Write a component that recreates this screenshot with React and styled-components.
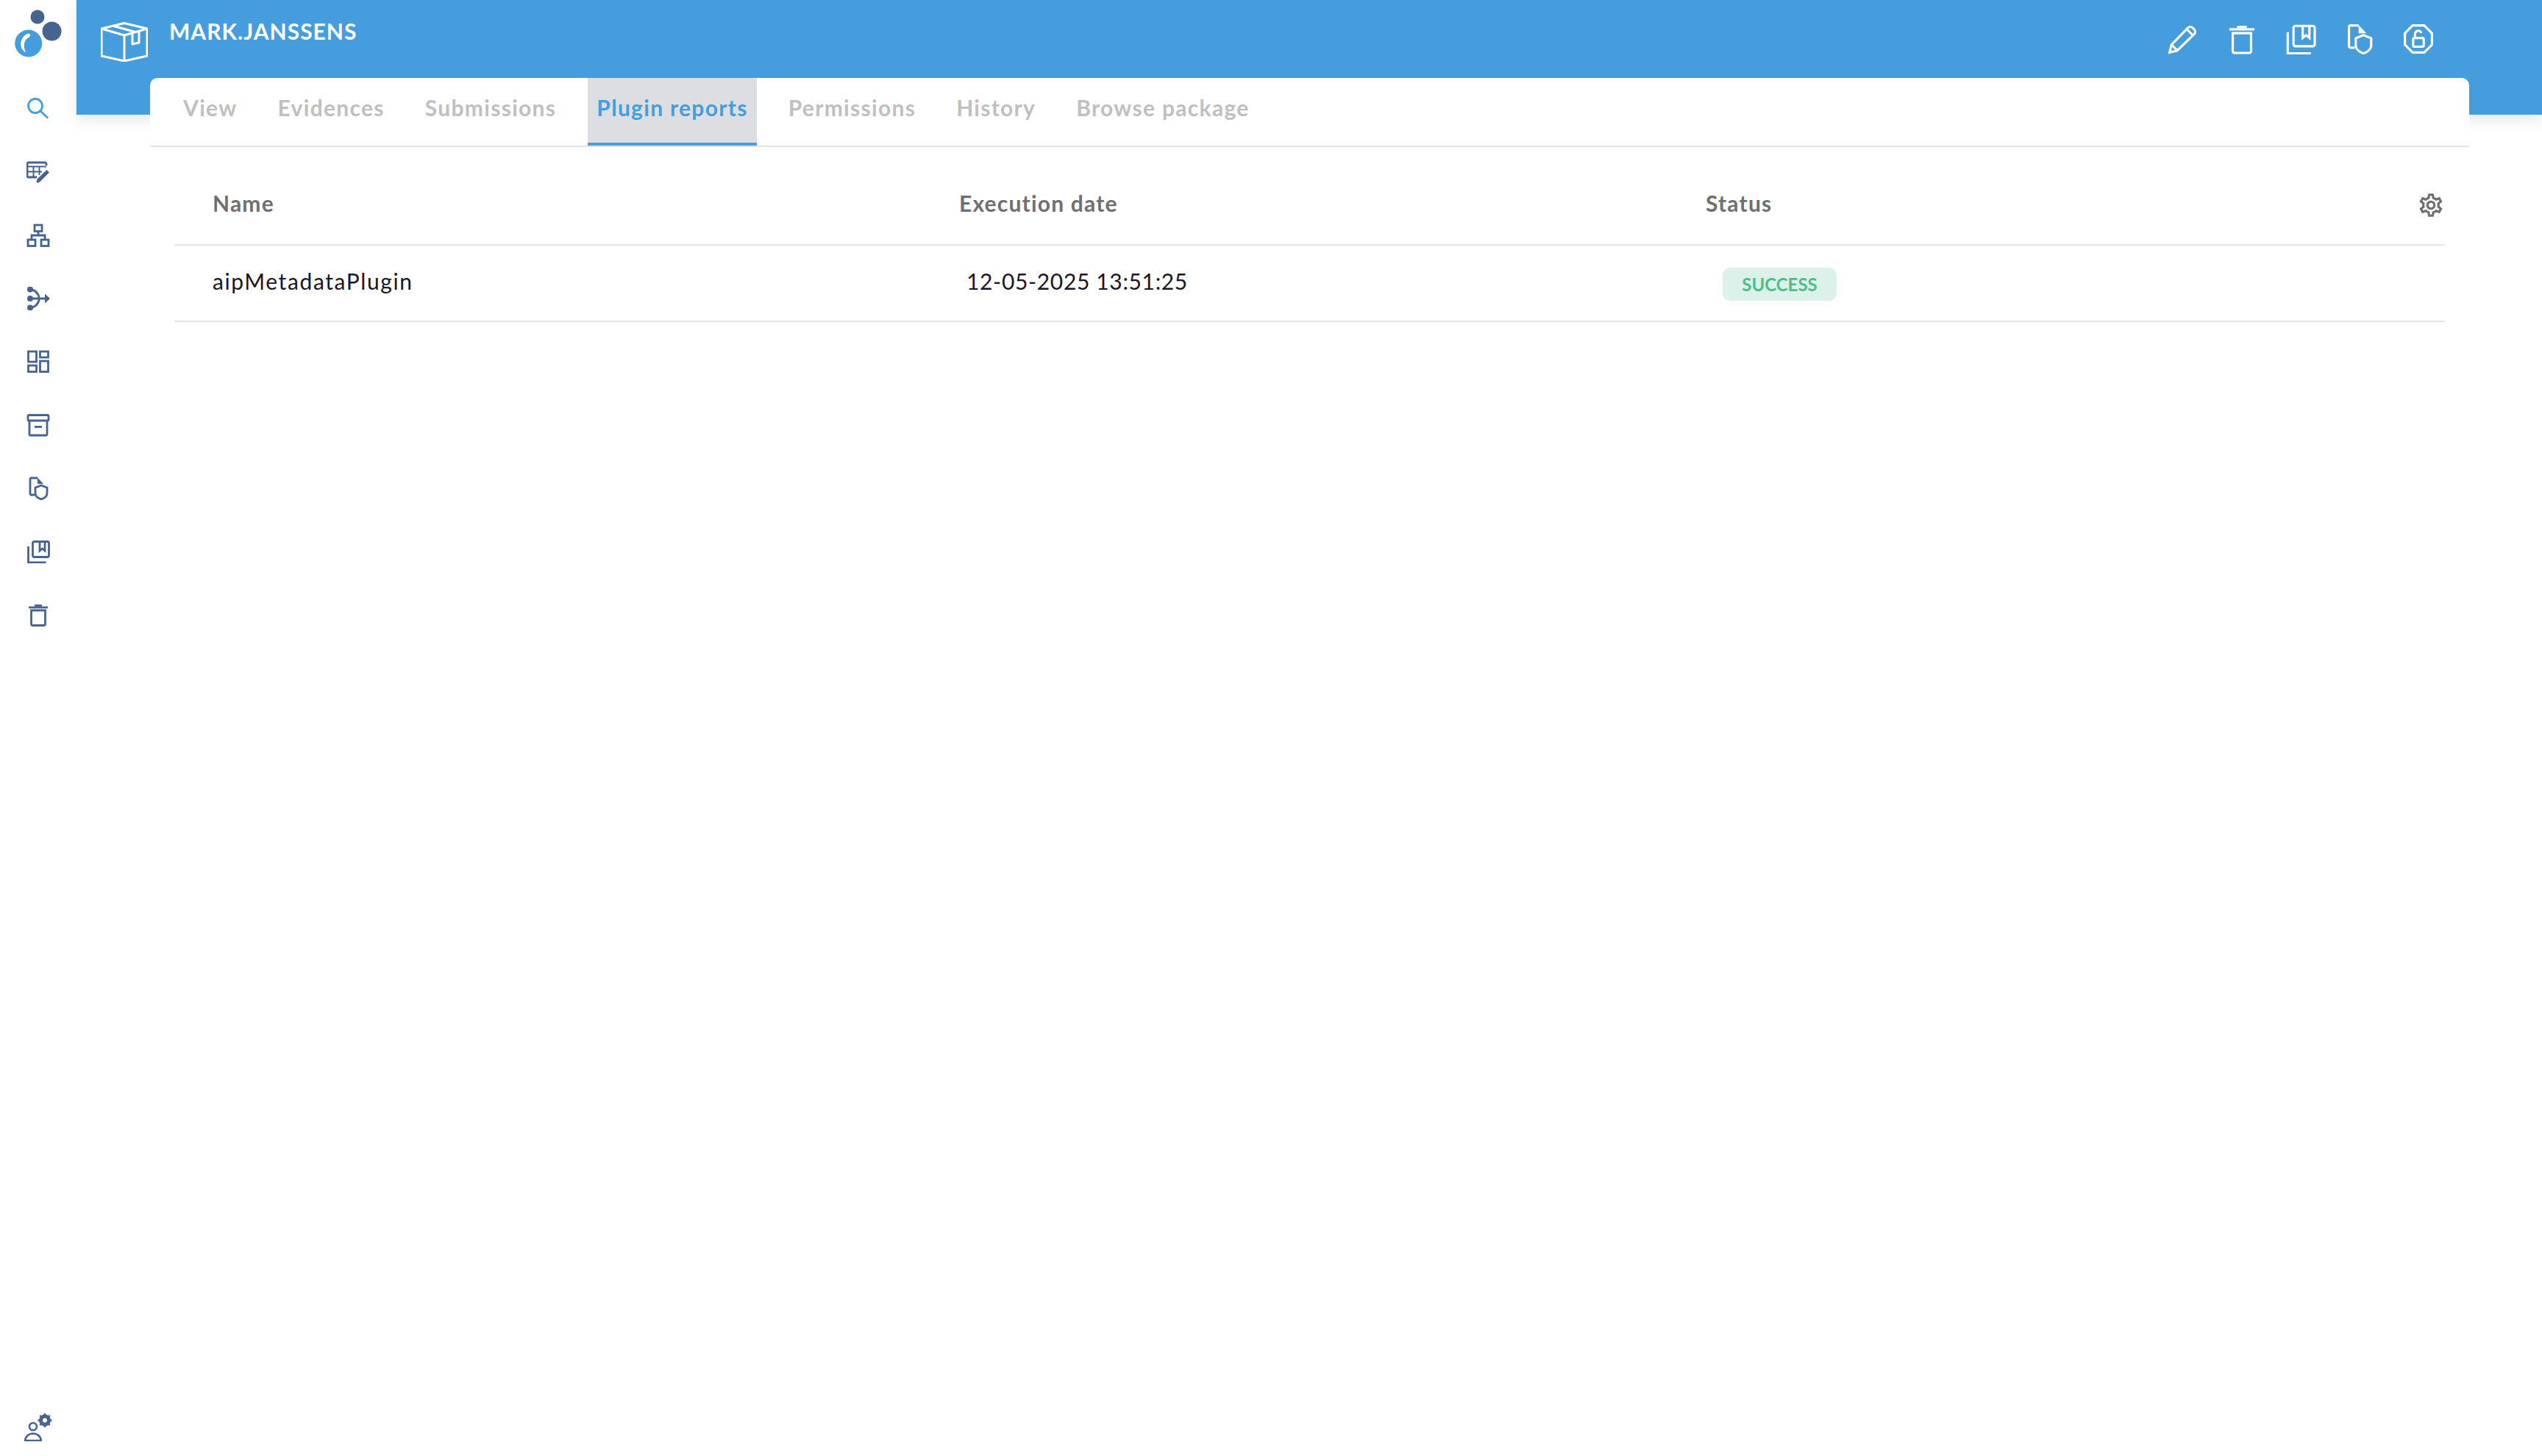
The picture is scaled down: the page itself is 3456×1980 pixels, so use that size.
import React from 'react';
import styled, { createGlobalStyle } from 'styled-components';
import { MdOutlineSettings } from 'react-icons/md';

const GlobalStyle = createGlobalStyle`
  html, body {
    margin: 0;
    padding: 0;
    background: #fff;
    font-family: Lato, "Noto Sans", sans-serif;
  }
`;

const Page = styled.div`
  display: flex;
  height: 100vh;
  overflow: hidden;
`;

const Sidebar = styled.aside`
  display: flex;
  flex-direction: column;
  align-items: center;
  width: 104px;
  flex-shrink: 0;
  padding-bottom: 20px;
  box-sizing: border-box;
`;

const LogoWrap = styled.div`
  display: flex;
  justify-content: center;
  align-items: flex-start;
  height: 105px;
  width: 100%;
  padding-top: 12px;
  box-sizing: border-box;
`;

const NavItem = styled.a`
  display: flex;
  align-items: center;
  justify-content: center;
  height: 86px;
  width: 100%;
  color: ${(p) => (p.$active ? '#469ddd' : '#46648f')};
`;

const BottomItem = styled.a`
  display: flex;
  margin-top: auto;
  color: #46648f;
`;

const Main = styled.main`
  flex: 1;
  min-width: 0;
`;

const Header = styled.header`
  display: flex;
  align-items: flex-start;
  height: 156px;
  padding: 30px 147px 0 32px;
  box-sizing: border-box;
  background: #469ddd;
  border-left: 1px solid #4192cf;
  box-shadow: 0 8px 18px rgba(0, 0, 0, 0.09);
  color: #fff;
`;

const Title = styled.h1`
  margin: -6px 0 0 29px;
  font-size: 30px;
  line-height: 36px;
  font-weight: 700;
  letter-spacing: 1px;
`;

const Actions = styled.div`
  display: flex;
  gap: 38px;
  margin: 2px 0 0 auto;
`;

const Card = styled.section`
  position: relative;
  margin: -50px 99px 0 100px;
  background: #fff;
  border-radius: 10px 10px 0 0;
`;

const Tabs = styled.nav`
  display: flex;
  gap: 31px;
  padding-left: 33px;
  border-bottom: 2px solid #e4e4e4;
`;

const Tab = styled.a`
  display: block;
  height: 92px;
  padding: 22px 12px 0;
  box-sizing: border-box;
  font-size: 30px;
  line-height: 36px;
  font-weight: 700;
  letter-spacing: 1.3px;
  color: ${(p) => (p.$active ? '#469ddd' : '#bfbfbf')};
  background: ${(p) => (p.$active ? '#dcdee2' : 'transparent')};
  border-bottom: 4px solid ${(p) => (p.$active ? '#469ddd' : 'transparent')};
`;

const Table = styled.div`
  margin: 0 33px;
`;

const Row = styled.div`
  display: grid;
  grid-template-columns: 1015px 1015px 1fr;
  align-items: center;
  padding-left: 52px;
  border-bottom: 2px solid #e4e4e4;
`;

const HeadRow = styled(Row)`
  height: 134px;
  padding-top: 20px;
  box-sizing: border-box;
`;

const BodyRow = styled(Row)`
  height: 104px;
  box-sizing: border-box;
`;

const HeadCell = styled.div`
  display: flex;
  align-items: center;
  justify-content: space-between;
  font-size: 30px;
  line-height: 36px;
  font-weight: 700;
  letter-spacing: 1.2px;
  color: #6f6f6f;
`;

const GearButton = styled.span`
  display: flex;
  margin-top: 6px;
  color: #6f6f6f;
  font-size: 38px;
`;

const Cell = styled.div`
  margin-top: -6px;
  padding-left: ${(p) => p.$indent || 0}px;
  font-size: 30px;
  line-height: 36px;
  font-weight: 400;
  color: #1e1428;
  letter-spacing: ${(p) => p.$spacing}px;
`;

const Badge = styled.span`
  display: inline-flex;
  align-items: center;
  justify-content: center;
  justify-self: start;
  width: 155px;
  height: 45px;
  margin: 2px 0 0 23px;
  border-radius: 10px;
  background: #dcf1e9;
  color: #4dbd8a;
  font-size: 24px;
  font-weight: 700;
`;

const Glyph = styled.svg.attrs((p) => ({
  viewBox: '0 0 32 32',
  width: p.$size || 32,
  height: p.$size || 32,
  fill: 'none',
  stroke: 'currentColor',
  strokeWidth: p.$size ? 2.4 : 2.8,
}))`
  display: block;
  flex-shrink: 0;
`;

const Logo = () => (
  <svg width="64" height="68" viewBox="20 12 64 68">
    <circle cx="51" cy="23" r="9.5" fill="#46648f" />
    <circle cx="70.5" cy="42.5" r="13" fill="#46648f" />
    <circle cx="38.7" cy="59" r="18.5" fill="#469ddd" />
    <path d="M39 45.5C32 47 27 55 28.5 63C29.500 67 32 70 35.500 71C31 65 32 55 38 51.500C41.500 50.500 42 46 39 45.500Z" fill="#fff" />
  </svg>
);

const SearchIcon = () => (
  <svg width="32" height="32" viewBox="0 0 32 32" fill="none" stroke="currentColor" strokeWidth="2.8">
    <circle cx="12" cy="12" r="9.500" />
    <path d="M18.800 18.800L29 28.500" />
  </svg>
);

const TableEditIcon = () => (
  <Glyph>
    <path d="M27 7V5a2 2 0 0 0-2-2H3a2 2 0 0 0-2 2v16a2 2 0 0 0 2 2h11" />
    <path d="M1 8.500h26M1 15.500h20M9.500 8.500V23M17.500 8.500V20" strokeWidth="2" />
    <path d="M15 31l-1.500-1.500 1-4L27.500 13l3.500 3.500L18.500 29z" fill="currentColor" stroke="none" />
  </Glyph>
);

const NetworkIcon = () => (
  <Glyph>
    <rect x="11" y="2" width="10" height="8.500" />
    <rect x="2" y="22" width="10" height="8.500" />
    <rect x="20" y="22" width="10" height="8.500" />
    <path d="M16 10.500V16M7 22v-6h18v6" />
  </Glyph>
);

const MergeIcon = () => (
  <Glyph>
    <circle cx="5" cy="3.500" r="4" fill="currentColor" stroke="none" />
    <circle cx="5" cy="16" r="4" fill="currentColor" stroke="none" />
    <circle cx="5" cy="28.500" r="4" fill="currentColor" stroke="none" />
    <path d="M5 16h21M5 3.500c8 1 11.500 6 12.500 12.500M5 28.500c8-1 11.500-6 12.500-12.500" />
    <path d="M25 9.500L32 16l-7 6.500z" fill="currentColor" stroke="none" />
  </Glyph>
);

const GridIcon = () => (
  <Glyph>
    <rect x="2.500" y="2" width="11" height="14" />
    <rect x="18.500" y="2" width="11" height="8" />
    <rect x="2.500" y="21" width="11" height="8.500" />
    <rect x="18.500" y="15" width="11" height="14.500" />
  </Glyph>
);

const ArchiveIcon = () => (
  <Glyph>
    <rect x="2" y="2.500" width="28" height="7.500" rx="1.500" />
    <path d="M4 10v18.500a1.500 1.500 0 0 0 1.500 1.500h21a1.500 1.500 0 0 0 1.500-1.500V10" />
    <path d="M11 18.500h10" />
  </Glyph>
);

const DocShieldIcon = ({ size }) => (
  <Glyph $size={size}>
    <path d="M11 25H6.500A1.500 1.500 0 0 1 5 23.500V3.500A1.500 1.500 0 0 1 6.500 2H15" />
    <path d="M15 1.500l8 8.500h-8z" fill="currentColor" stroke="none" />
    <path d="M20 12l8 3.200v7.300c0 3.800-3.500 7-8 8.500c-4.500-1.500-8-4.700-8-8.500v-7.300z" />
  </Glyph>
);

const BooksIcon = ({ size }) => (
  <Glyph $size={size}>
    <rect x="8.500" y="2.500" width="22" height="21" rx="2" />
    <path d="M18 2.500v12.500l3.500-3l3.500 3V2.500" />
    <path d="M2.500 9v22h24" />
  </Glyph>
);

const TrashIcon = ({ size }) => (
  <Glyph $size={size}>
    <path d="M3 6h26" />
    <path d="M11 3.500h10" />
    <path d="M6.500 10v18.500a2 2 0 0 0 2 2h15a2 2 0 0 0 2-2V10H6.500z" />
  </Glyph>
);

const PencilIcon = ({ size }) => (
  <Glyph $size={size}>
    <path d="M2 30l2-8L21 4.500a3.600 3.600 0 0 1 5 0l1.500 1.500a3.600 3.600 0 0 1 0 5L10 28z" />
    <path d="M4 22l6 6M20 6l6 6" />
  </Glyph>
);

const OctagonLockIcon = ({ size }) => (
  <Glyph $size={size}>
    <path d="M10 2h12l8 8v12l-8 8H10l-8-8V10z" />
    <rect x="10.500" y="15" width="11" height="9" rx="1.500" />
    <path d="M12.500 15v-4a3.300 3.300 0 0 1 6.500-1" />
  </Glyph>
);

const BoxIcon = () => (
  <svg width="64" height="54" viewBox="0 0 64 54" fill="none" stroke="#fff" strokeWidth="3" strokeLinejoin="round">
    <path d="M32 1.500L63 9v37L32 53L1 46V9z" />
    <path d="M1 9l31 9l31-9M32 18v35M16 5l31 8.500" />
    <path d="M43 15v15l9-2V12" />
  </svg>
);

const UserCogIcon = () => (
  <svg width="40" height="38" viewBox="0 0 40 38" fill="none" stroke="currentColor" strokeWidth="2.600">
    <circle cx="13" cy="18" r="5" />
    <path d="M2.300 37a10.700 9.500 0 0 1 21.400 0z" />
    <circle cx="29" cy="9.500" r="5.500" strokeWidth="5" />
    <path d="M29 0v4M29 15v4M19.500 9.500h4M34.500 9.500h4M22.300 2.800l2.500 2.500M33.200 13.700l2.500 2.500M22.300 16.200l2.500-2.500M33.200 5.300l2.500-2.500" />
  </svg>
);

const sideItems = [
  { key: 'search', icon: <SearchIcon />, active: true },
  { key: 'table', icon: <TableEditIcon /> },
  { key: 'network', icon: <NetworkIcon /> },
  { key: 'merge', icon: <MergeIcon /> },
  { key: 'grid', icon: <GridIcon /> },
  { key: 'archive', icon: <ArchiveIcon /> },
  { key: 'shield', icon: <DocShieldIcon /> },
  { key: 'books', icon: <BooksIcon /> },
  { key: 'trash', icon: <TrashIcon /> },
];

const tabs = ['View', 'Evidences', 'Submissions', 'Plugin reports', 'Permissions', 'History', 'Browse package'];

function App() {
  return (
    <Page>
      <GlobalStyle />
      <Sidebar>
        <LogoWrap>
          <Logo />
        </LogoWrap>
        {sideItems.map((item) => (
          <NavItem key={item.key} $active={item.active}>
            {item.icon}
          </NavItem>
        ))}
        <BottomItem>
          <UserCogIcon />
        </BottomItem>
      </Sidebar>
      <Main>
        <Header>
          <BoxIcon />
          <Title>MARK.JANSSENS</Title>
          <Actions>
            <PencilIcon size={42} />
            <TrashIcon size={42} />
            <BooksIcon size={42} />
            <DocShieldIcon size={42} />
            <OctagonLockIcon size={42} />
          </Actions>
        </Header>
        <Card>
          <Tabs>
            {tabs.map((t) => (
              <Tab key={t} $active={t === 'Plugin reports'}>
                {t}
              </Tab>
            ))}
          </Tabs>
          <Table>
            <HeadRow>
              <HeadCell>Name</HeadCell>
              <HeadCell>Execution date</HeadCell>
              <HeadCell>
                Status
                <GearButton>
                  <MdOutlineSettings />
                </GearButton>
              </HeadCell>
            </HeadRow>
            <BodyRow>
              <Cell $spacing={1.6}>aipMetadataPlugin</Cell>
              <Cell $indent={10} $spacing={0.65}>12-05-2025 13:51:25</Cell>
              <Badge>SUCCESS</Badge>
            </BodyRow>
          </Table>
        </Card>
      </Main>
    </Page>
  );
}

export default App;
